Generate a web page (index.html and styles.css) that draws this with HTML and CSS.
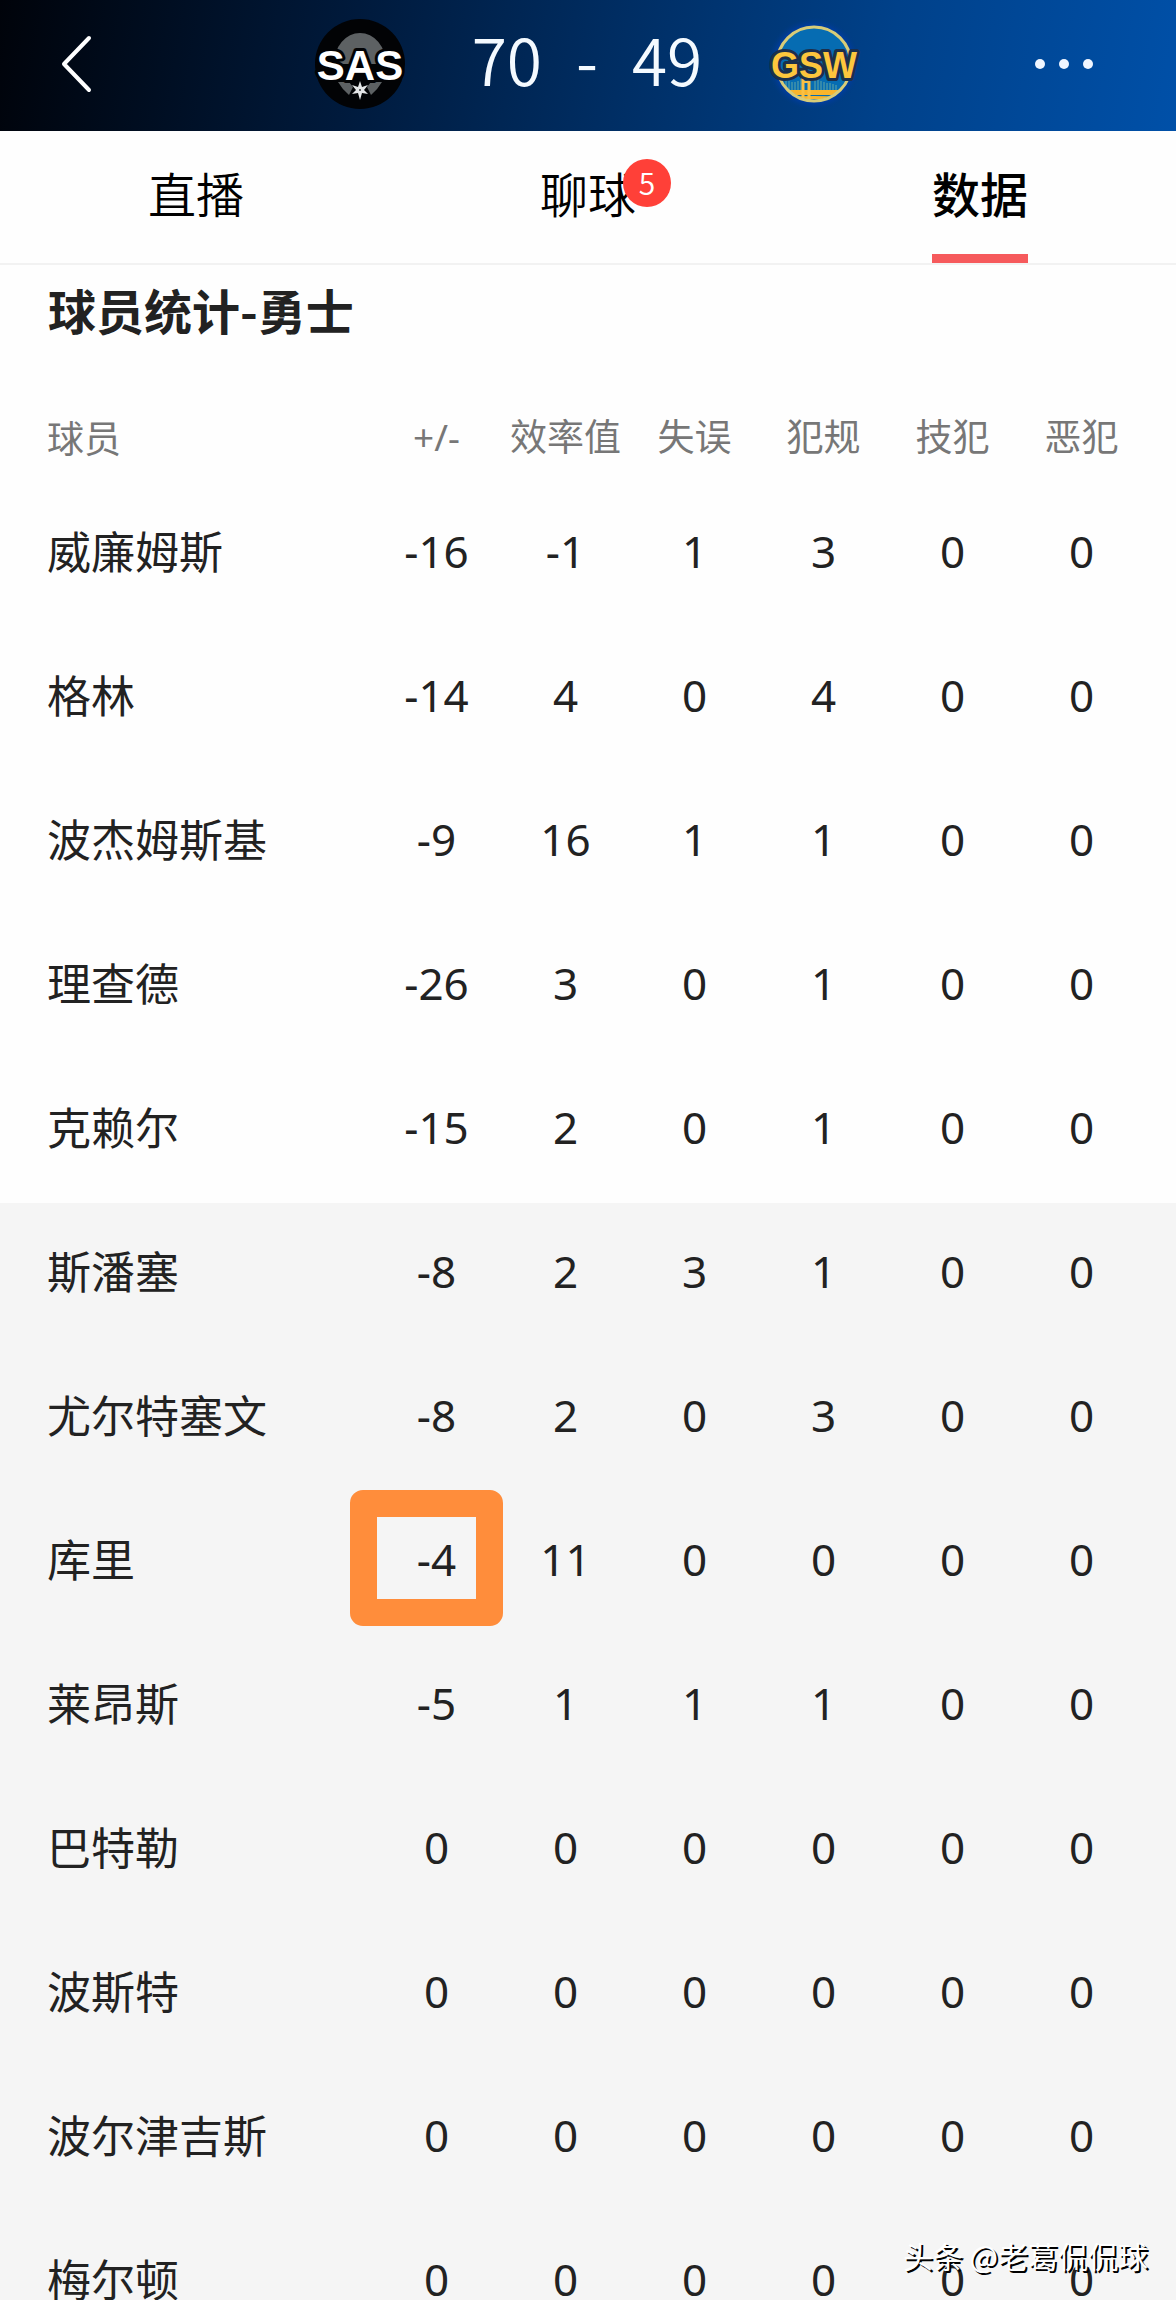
FILE: index.html
```html
<!DOCTYPE html>
<html lang="zh-CN">
<head>
    <meta charset="UTF-8">
    <meta name="viewport" content="width=device-width, initial-scale=1">
    <title>球员统计-勇士</title>
    <link rel="stylesheet" href="styles.css">
</head>
<body>
    <div class="app">
        <header class="scorebar">
            <button class="icon-btn" type="button" aria-label="返回">
                <svg width="32" height="60" viewBox="0 0 32 60">
                    <path d="M29 4 L4 30 L29 56" fill="none" stroke="#fff" stroke-width="4" stroke-linecap="round" stroke-linejoin="round"/>
                </svg>
            </button>

            <div class="match">
                <svg class="logo" viewBox="0 0 96 96" aria-hidden="true">
                    <circle cx="48" cy="48" r="45" fill="#020305"/>
                    <path d="M22 48 A26 31 0 0 1 74 48 Z" fill="#5d6163"/>
                    <path d="M26 66 Q30 73 37 79 L41 71 L37 66 Z M70 66 Q66 73 59 79 L55 71 L59 66 Z" fill="#5d6163"/>
                    <text x="48" y="64" class="logo-text sas">SAS</text>
                    <path d="M48 65 L50 71 L56 69 L52 74 L56 78 L50 77 L48 84 L46 77 L40 78 L44 74 L40 69 L46 71 Z" fill="#e4e6e7"/>
                    <circle cx="48" cy="74" r="1" fill="#333"/>
                </svg>

                <div class="score"><span>70</span><span>-</span><span>49</span></div>

                <svg class="logo" viewBox="0 0 96 96" aria-hidden="true">
                    <defs>
                        <radialGradient id="glow">
                            <stop offset="80%" stop-color="#003da8"/>
                            <stop offset="100%" stop-color="#003a80" stop-opacity="0"/>
                        </radialGradient>
                        <clipPath id="disc"><circle cx="48" cy="48" r="36"/></clipPath>
                    </defs>
                    <circle cx="48" cy="48" r="47" fill="url(#glow)"/>
                    <circle cx="48" cy="48" r="37" fill="#066cb2"/>
                    <g clip-path="url(#disc)">
                        <path d="M20 64 V74 M23 65 V74 M26 66 V74 M29 66 V74 M32 65 V74 M35 63 V74 M49 63 V74 M52 63 V74 M55 65 V74 M58 66 V74 M61 67 V74 M64 67 V74 M67 68 V74 M70 69 V74" stroke="#63a7a5" stroke-width="1"/>
                        <path d="M10 74 H86 V79 H10 Z M19 81 Q48 79 77 81 V83 H19 Z" fill="#f9b52c"/>
                        <path d="M37 60 V88 M43 60 V88" stroke="#f9c044" stroke-width="3"/>
                        <path d="M37 66 H43" stroke="#f9c044" stroke-width="2"/>
                    </g>
                    <circle cx="48" cy="48" r="37" fill="none" stroke="#d8cc78" stroke-width="3"/>
                    <text x="48" y="62" class="logo-text gsw">GSW</text>
                </svg>
            </div>

            <button class="icon-btn more" type="button" aria-label="更多">
                <svg width="60" height="12" viewBox="0 0 60 12" fill="#f0f6ff">
                    <circle cx="6" cy="6" r="5"/>
                    <circle cx="30" cy="6" r="5"/>
                    <circle cx="54" cy="6" r="5"/>
                </svg>
            </button>
        </header>

        <nav class="tabs">
            <a href="#live"><span class="tab-label">直播</span></a>
            <a href="#chat"><span class="tab-label">聊球<span class="badge">5</span></span></a>
            <a href="#stats" class="active" aria-current="page"><span class="tab-label">数据</span></a>
        </nav>

        <main id="stats">
            <h1>球员统计-勇士</h1>
            <table>
                <thead>
                    <tr><th scope="col" class="name">球员</th><th scope="col">+/-</th><th scope="col">效率值</th><th scope="col">失误</th><th scope="col">犯规</th><th scope="col">技犯</th><th scope="col">恶犯</th></tr>
                </thead>
                <!-- Starters -->
                <tbody>
                    <tr><th scope="row">威廉姆斯</th><td>-16</td><td>-1</td><td>1</td><td>3</td><td>0</td><td>0</td></tr>
                    <tr><th scope="row">格林</th><td>-14</td><td>4</td><td>0</td><td>4</td><td>0</td><td>0</td></tr>
                    <tr><th scope="row">波杰姆斯基</th><td>-9</td><td>16</td><td>1</td><td>1</td><td>0</td><td>0</td></tr>
                    <tr><th scope="row">理查德</th><td>-26</td><td>3</td><td>0</td><td>1</td><td>0</td><td>0</td></tr>
                    <tr><th scope="row">克赖尔</th><td>-15</td><td>2</td><td>0</td><td>1</td><td>0</td><td>0</td></tr>
                </tbody>
                <!-- Bench -->
                <tbody class="bench">
                    <tr><th scope="row">斯潘塞</th><td>-8</td><td>2</td><td>3</td><td>1</td><td>0</td><td>0</td></tr>
                    <tr><th scope="row">尤尔特塞文</th><td>-8</td><td>2</td><td>0</td><td>3</td><td>0</td><td>0</td></tr>
                    <tr><th scope="row">库里</th><td class="marked">-4</td><td>11</td><td>0</td><td>0</td><td>0</td><td>0</td></tr>
                    <tr><th scope="row">莱昂斯</th><td>-5</td><td>1</td><td>1</td><td>1</td><td>0</td><td>0</td></tr>
                    <tr><th scope="row">巴特勒</th><td>0</td><td>0</td><td>0</td><td>0</td><td>0</td><td>0</td></tr>
                    <tr><th scope="row">波斯特</th><td>0</td><td>0</td><td>0</td><td>0</td><td>0</td><td>0</td></tr>
                    <tr><th scope="row">波尔津吉斯</th><td>0</td><td>0</td><td>0</td><td>0</td><td>0</td><td>0</td></tr>
                    <tr><th scope="row">梅尔顿</th><td>0</td><td>0</td><td>0</td><td>0</td><td>0</td><td>0</td></tr>
                </tbody>
            </table>
        </main>

        <div class="watermark">头条 @老葛侃侃球</div>
    </div>
</body>
</html>
```
FILE: styles.css
```css
*, *::after {
    margin: 0;
    padding: 0;
    box-sizing: border-box;
}

body {
    font-family: "Noto Sans", "Noto Sans CJK SC", sans-serif;
    background-color: #fefefe;
    color: #222;
}

.app {
    position: relative;
    display: flex;
    flex-direction: column;
    height: 100vh;
    overflow: hidden;
}

/* Score bar */
.scorebar {
    display: grid;
    grid-template-columns: 1fr auto 1fr;
    align-items: center;
    flex: none;
    height: 131px;
    padding: 0 82px 4px 60px;
    background: linear-gradient(100deg, #00030a 0%, #001a3c 30%, #003068 55%, #00418a 75%, #0050a8 100%);
}

.icon-btn {
    display: flex;
    justify-self: start;
    background: none;
    border: none;
    cursor: pointer;
}

.icon-btn.more {
    justify-self: end;
}

.match {
    display: flex;
    align-items: center;
    gap: 64px;
    margin-left: 20px;
}

.logo {
    width: 96px;
    height: 96px;
}

.logo-text {
    font-family: "Liberation Sans", sans-serif;
    font-weight: bold;
    text-anchor: middle;
    stroke-width: 6px;
    stroke-linejoin: round;
    paint-order: stroke;
}

.sas {
    font-size: 42px;
    fill: #fff;
    stroke: #020305;
}

.gsw {
    font-size: 36px;
    fill: #fdc63d;
    stroke: #1c2f4c;
}

.score {
    display: flex;
    gap: 34px;
    padding-bottom: 12px;
    font-family: "Noto Sans CJK SC", sans-serif;
    font-size: 64px;
    font-weight: 350;
    line-height: 64px;
    color: #f4faff;
}

/* Tabs */
.tabs {
    display: grid;
    grid-template-columns: repeat(3, 1fr);
    flex: none;
    border-bottom: 2px solid #f2f2f2;
    font-family: "Noto Sans CJK SC", sans-serif;
}

.tabs a {
    display: flex;
    justify-content: center;
    color: #000;
    text-decoration: none;
}

.tab-label {
    position: relative;
    padding: 29px 0 30px;
    border-bottom: 9px solid transparent;
    font-size: 48px;
    font-weight: 350;
    line-height: 64px;
}

.active .tab-label {
    font-weight: 500;
    border-bottom-color: #f65a5c;
}

.badge {
    position: absolute;
    top: 28px;
    left: 100%;
    width: 48px;
    height: 48px;
    margin-left: -13px;
    border-radius: 50%;
    background-color: #ff4038;
    color: #fff;
    font-size: 30px;
    line-height: 46px;
    text-align: center;
}

/* Player stats */
h1 {
    padding: 12px 48px 20px;
    font-family: "Noto Sans CJK SC", sans-serif;
    font-size: 48px;
    font-weight: 700;
    line-height: 64px;
}

table {
    width: 100%;
    table-layout: fixed;
    border-collapse: collapse;
}

th, td {
    width: 129px;
    height: 144px;
    font-size: 44px;
    font-weight: 400;
    line-height: 64px;
    text-align: center;
    white-space: nowrap;
}

tr > :first-child {
    width: auto;
    padding-left: 47px;
    font-family: "Noto Sans CJK SC", sans-serif;
    text-align: left;
}

tr > :last-child {
    width: 159px;
    padding-right: 30px;
}

thead th {
    height: 122px;
    padding-top: 30px;
    font-size: 37px;
    color: #777;
}

tbody th {
    padding-bottom: 10px;
}

tbody td {
    padding-bottom: 8px;
}

.bench {
    background-color: #f5f5f5;
}

/* Highlight drawn round a single value */
.marked {
    position: relative;
}

.marked::after {
    content: "";
    position: absolute;
    top: -1px;
    left: -22px;
    width: 153px;
    height: 136px;
    border: 27px solid #ff8d3b;
    border-radius: 13px;
}

.watermark {
    position: absolute;
    right: 28px;
    bottom: 25px;
    font-family: "Noto Sans CJK SC", sans-serif;
    font-size: 30px;
    line-height: 40px;
    color: #fff;
    text-shadow: 2px 2px 0 #000;
}
```
